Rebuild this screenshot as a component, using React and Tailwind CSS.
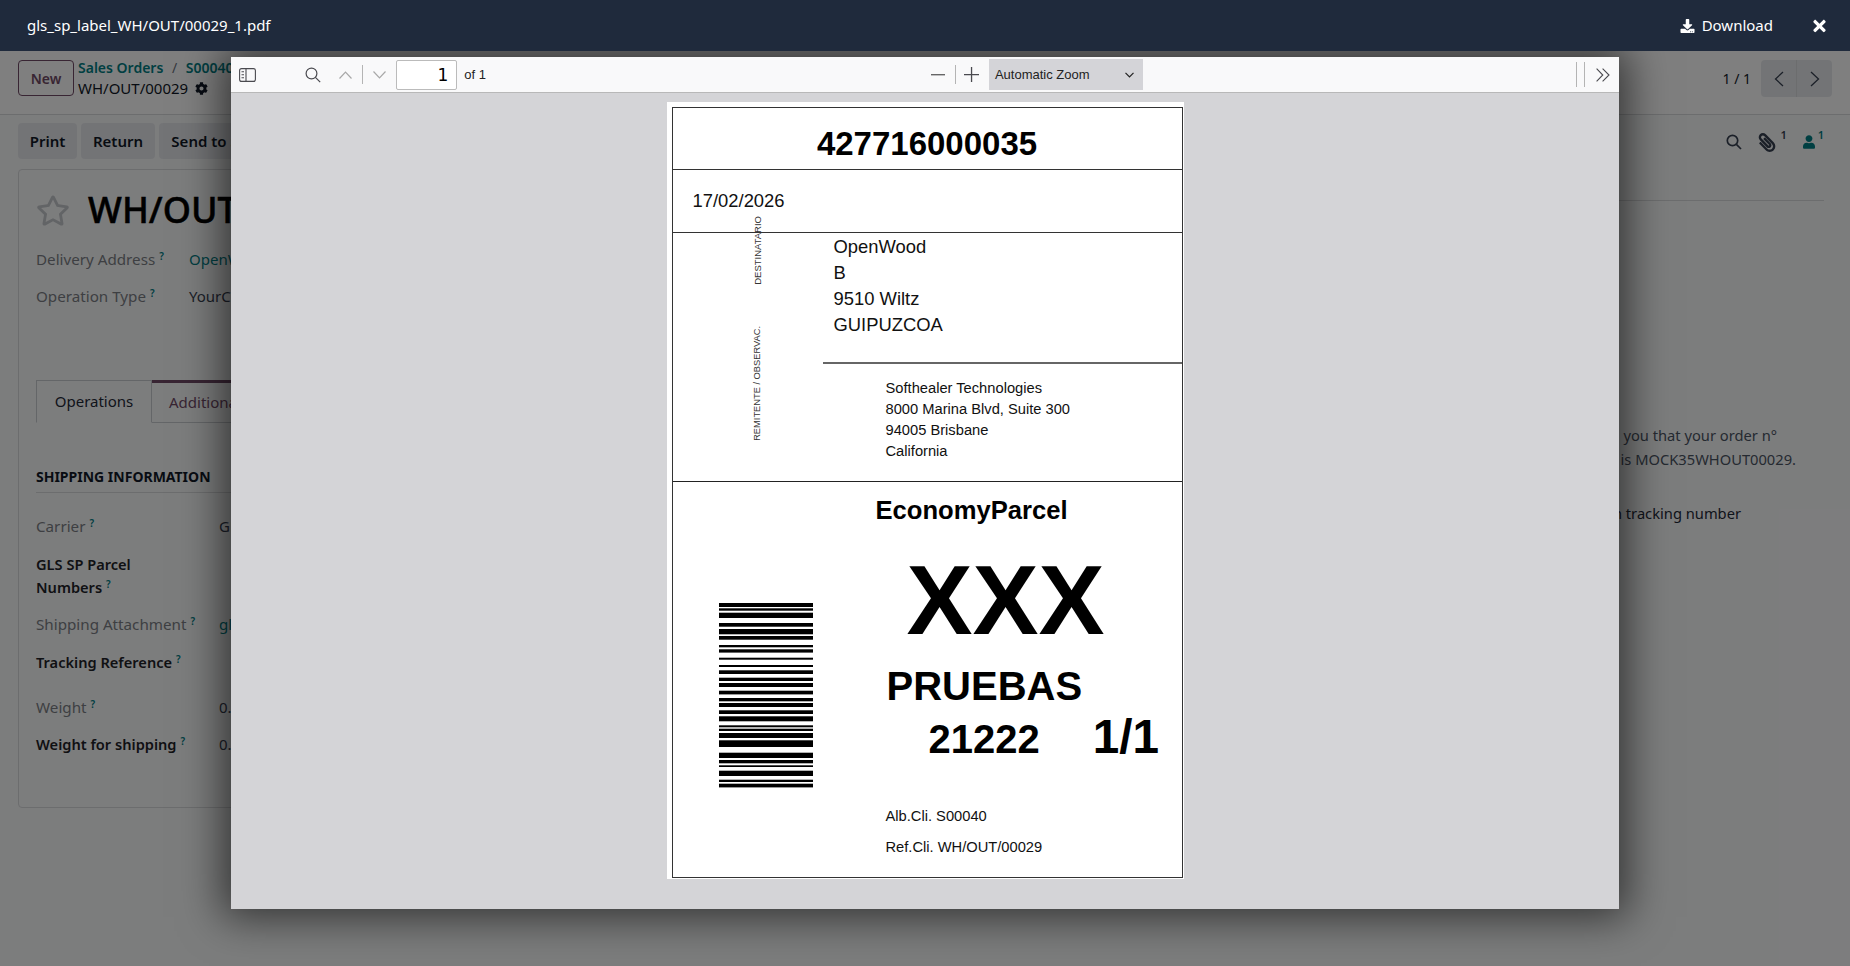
import { FaCog, FaDownload, FaPaperclip, FaRegStar, FaTimes, FaUser } from 'react-icons/fa';

// barres du code-barres : [y, hauteur] en px de la page
const BARS = [
  [0, 4], [5.3, 2.4], [9.7, 5.3], [20, 3.7], [26, 5.3], [33, 3.7], [42, 2.3], [46.3, 3.3],
  [54.7, 2], [62, 2], [67.3, 3.7], [74.7, 3.3], [80, 4], [87.7, 3.7], [95, 3.3], [100, 4],
  [107.3, 3.7], [113.3, 5], [122.3, 2], [125.7, 2.3], [130, 5], [137.3, 6.7], [149.7, 5.3],
  [157, 3.3], [162.3, 1.7], [167.7, 5.3], [176.7, 2.3], [180.7, 3.7],
];

const Hint = () => (
  <sup className="ml-[4px] text-[10px] font-semibold text-[#017e84]">?</sup>
);

const FieldRow = ({ label, value, bold, link, className = '' }) => (
  <div className={`flex items-start ${className}`}>
    <div className={`w-[183px] shrink-0 leading-[23px] ${bold ? 'text-[14.6px] font-semibold text-[#1f2328]' : 'text-[15.2px] text-[#7c7f85]'}`}>
      {label}<Hint />
    </div>
    <div className={`text-[15px] leading-[23px] whitespace-nowrap ${link ? 'text-[#017e84]' : 'text-[#374151]'}`}>{value}</div>
  </div>
);

const PdfToolbar = () => (
  <div className="h-[36px] shrink-0 flex items-center bg-[#f9f9fa] border-b border-[#b8b8b8] font-['Liberation_Sans',sans-serif] text-[#222]">
    <svg className="ml-[8px] w-[17px] h-[14px] text-[#4a4a4f]" viewBox="0 0 17 14" fill="none" stroke="currentColor" strokeWidth="1.1">
      <rect x="0.6" y="0.6" width="15.8" height="12.8" rx="2" />
      <path d="M7 0.6v12.8M2.5 3.8h2.5M2.5 6.8h2.5M2.5 9.8h2.5" />
    </svg>
    <svg className="ml-[49px] w-[16px] h-[16px] text-[#4a4a4f]" viewBox="0 0 16 16" fill="none" stroke="currentColor" strokeWidth="1.2">
      <circle cx="6.5" cy="6.5" r="5.4" />
      <path d="M10.4 10.4 15.2 15.2" />
    </svg>
    <svg className="ml-[18px] w-[13px] h-[8px] text-[#a8a8a8]" viewBox="0 0 13 8" fill="none" stroke="currentColor" strokeWidth="1.2">
      <path d="M0.5 7.5 6.5 1.2l6 6.3" />
    </svg>
    <div className="ml-[10px] w-px h-[19px] bg-[#b4b4b4]" />
    <svg className="ml-[10px] w-[13px] h-[8px] text-[#a8a8a8]" viewBox="0 0 13 8" fill="none" stroke="currentColor" strokeWidth="1.2">
      <path d="M0.5 0.5 6.5 6.8l6-6.3" />
    </svg>
    <div className="ml-[10px] w-[61px] h-[30px] bg-white border border-[#bbb] rounded-[2px] pr-[8px] text-right text-[17px] leading-[28px] font-['DejaVu_Sans',sans-serif] text-black">1</div>
    <span className="ml-[7px] text-[13px]">of 1</span>
    <svg className="ml-[445px] w-[14px] h-[2px] text-[#666]" viewBox="0 0 14 2"><rect width="14" height="1.4" fill="currentColor" /></svg>
    <div className="ml-[10px] w-px h-[19px] bg-[#b4b4b4]" />
    <svg className="ml-[8px] w-[15px] h-[15px] text-[#4a4a4f]" viewBox="0 0 15 15"><path d="M0 7h15v1.3H0zM6.9 0h1.3v15H6.9z" fill="currentColor" /></svg>
    <div className="ml-[10px] w-[154px] h-[31px] bg-[#d4d4d8] flex items-center justify-between pl-[6px] pr-[9px] text-[13px]">
      <span>Automatic Zoom</span>
      <svg className="w-[9px] h-[6px]" viewBox="0 0 9 6" fill="none" stroke="currentColor" strokeWidth="1.2"><path d="M0.5 0.8 4.5 5l4-4.2" /></svg>
    </div>
    <div className="ml-[433px] w-px h-[25px] bg-[#b4b4b4]" />
    <div className="ml-[7px] w-px h-[25px] bg-[#b4b4b4]" />
    <svg className="ml-[11px] w-[14px] h-[14px] text-[#4a4a4f]" viewBox="0 0 14 14" fill="none" stroke="currentColor" strokeWidth="1.1">
      <path d="M0.6 0.6 6.8 7l-6.2 6.4M6.6 0.6 13 7l-6.4 6.4" />
    </svg>
  </div>
);

const LabelPage = () => (
  <div className="relative w-[517px] h-[777px] mx-auto mt-[9px] bg-white pt-[5px] pl-[5px] text-black font-['Liberation_Sans',sans-serif]">
    <div className="relative w-[511px] h-[771px] border border-[#333] flex flex-col">
      <div className="h-[62px] shrink-0 flex items-center justify-center pt-[9px] border-b border-[#333] text-[33px] font-bold leading-none">
        427716000035
      </div>
      <div className="h-[63px] shrink-0 flex items-center pl-[20px] pb-[1px] border-b border-[#333] text-[18.4px] text-[#111]">
        17/02/2026
      </div>
      <div className="h-[249px] shrink-0 border-b border-[#222] text-[#111]">
        <div className="pl-[161px] pt-[1px] text-[18.4px] leading-[26px]">
          <div>OpenWood</div>
          <div>B</div>
          <div>9510 Wiltz</div>
          <div>GUIPUZCOA</div>
        </div>
        <div className="ml-[150px] mt-[24px] border-t-2 border-[#666]" />
        <div className="pl-[213px] pt-[14px] text-[14.7px] leading-[21px]">
          <div>Softhealer Technologies</div>
          <div>8000 Marina Blvd, Suite 300</div>
          <div>94005 Brisbane</div>
          <div>California</div>
        </div>
      </div>
      <div className="flex-1 flex">
        <svg className="ml-[46px] mt-[121px] w-[94px] h-[185px] shrink-0" viewBox="0 0 95 185" preserveAspectRatio="none">
          {BARS.map(([y, h]) => (
            <rect key={y} x="0" y={y} width="95" height={h} fill="#000" />
          ))}
        </svg>
        <div className="ml-[73px] flex flex-col">
          <div className="mt-[13px] -ml-[10px] text-[25.6px] font-bold leading-[30px]">EconomyParcel</div>
          <div className="mt-[26px] ml-[21px] text-[99px] font-bold leading-[97px]">XXX</div>
          <div className="mt-[16px] ml-[1px] text-[40px] font-bold leading-[44px]">PRUEBAS</div>
          <div className="mt-[9px] ml-[43px] flex items-start">
            <div className="text-[40px] font-bold leading-[44px]">21222</div>
            <div className="ml-[53px] -mt-[2px] text-[47.7px] font-bold leading-[44px]">1/1</div>
          </div>
          <div className="mt-[45px] text-[14.7px] leading-[20px] text-[#111] whitespace-nowrap">Alb.Cli. S00040</div>
          <div className="mt-[11px] text-[14.7px] leading-[20px] text-[#111] whitespace-nowrap">Ref.Cli. WH/OUT/00029</div>
        </div>
      </div>
      <div className="absolute left-[79px] top-[108px] [writing-mode:vertical-rl] rotate-180 text-[9.5px] leading-[11px] text-[#333]">DESTINATARIO</div>
      <div className="absolute left-[79px] top-[218px] [writing-mode:vertical-rl] rotate-180 text-[9.3px] leading-[11px] text-[#333] whitespace-nowrap">REMITENTE / OBSERVAC.</div>
    </div>
  </div>
);

const App = () => (
  <div className="relative h-[966px] w-full overflow-hidden bg-[#f9fafb] font-['Noto_Sans',sans-serif] text-[15px] text-[#374151]">
    {/* page Odoo derrière le visualiseur */}
    <div className="pt-[51px]">
      <div className="h-[64px] bg-white border-b border-[#d8dadd] flex items-start px-[18px] pt-[9px]">
        <button type="button" className="w-[56px] h-[36px] rounded-[4px] border border-[#714b67] text-[14px] font-semibold text-[#714b67]">New</button>
        <div className="ml-[4px] -mt-[2px] leading-[20px]">
          <div className="text-[14px] font-semibold text-[#017e84] whitespace-nowrap">Sales Orders <span className="mx-[5px] font-normal text-[#6b7280]">/</span> S00040</div>
          <div className="text-[15px] text-[#111827] flex items-center whitespace-nowrap">WH/OUT/00029 <FaCog className="ml-[7px] w-[13px] h-[13px]" /></div>
        </div>
        <div className="ml-auto flex items-center h-[37px]">
          <span className="text-[14px] text-[#111827]">1 / 1</span>
          <div className="ml-[10px] flex w-[71px] h-[37px] rounded-[4px] overflow-hidden bg-[#e7e9ed]">
            <div className="flex-1 flex items-center justify-center border-r border-[#d8dadd]">
              <svg className="w-[10px] h-[16px]" viewBox="0 0 10 16" fill="none" stroke="#374151" strokeWidth="1.3"><path d="M9 1 1.5 8 9 15" /></svg>
            </div>
            <div className="flex-1 flex items-center justify-center">
              <svg className="w-[10px] h-[16px]" viewBox="0 0 10 16" fill="none" stroke="#374151" strokeWidth="1.3"><path d="M1 1l7.5 7L1 15" /></svg>
            </div>
          </div>
        </div>
      </div>
      <div className="flex">
        <div className="w-[1400px] shrink-0 pl-[18px]">
          <div className="flex gap-[4px] mt-[8px]">
            <button type="button" className="h-[36px] w-[59px] rounded-[4px] bg-[#e7e9ed] font-semibold text-[#111827]">Print</button>
            <button type="button" className="h-[36px] w-[74px] rounded-[4px] bg-[#e7e9ed] font-semibold text-[#111827]">Return</button>
            <button type="button" className="h-[36px] w-[150px] rounded-[4px] bg-[#e7e9ed] font-semibold text-[#111827] pr-[10px]">Send to Shipper</button>
          </div>
          <div className="mt-[10px] h-[639px] border border-[#d8dadd] rounded-[4px] pl-[17px] pt-[22px]">
            <div className="flex items-center h-[36px]">
              <FaRegStar className="w-[34px] h-[33px] text-[#c5c8cc]" />
              <h1 className="ml-[18px] text-[36px] leading-none font-medium text-black [-webkit-text-stroke:0.5px_black]">WH/OUT/00029</h1>
            </div>
            <div className="mt-[20px] flex">
              <div className="w-[153px] text-[15.2px] text-[#7c7f85] leading-[23px]">Delivery Address<Hint /></div>
              <div className="text-[#017e84] leading-[23px]">OpenWood</div>
            </div>
            <div className="mt-[14px] flex">
              <div className="w-[153px] text-[15.2px] text-[#7c7f85] leading-[23px]">Operation Type<Hint /></div>
              <div className="leading-[23px]">YourCompany: Delivery Orders</div>
            </div>
            <div className="mt-[72px] flex h-[43px] border-b border-[#c9ccd1]">
              <div className="w-[116px] h-[43px] border border-[#c9ccd1] border-b-[#f9fafb] flex items-center justify-center text-[#1f2937]">Operations</div>
              <div className="flex-1 border-t-[3px] border-[#714b67] pl-[17px] leading-[39px] text-[#714b67]">Additional Info</div>
            </div>
            <div className="mt-[43px] pb-[4px] border-b border-[#d8dadd] text-[14px] font-bold text-[#111827] leading-[22px]">SHIPPING INFORMATION</div>
            <FieldRow className="mt-[22px]" label="Carrier" value="GLS SP" />
            <FieldRow className="mt-[15px]" label={<>GLS SP Parcel<br />Numbers</>} value="" bold />
            <FieldRow className="mt-[14px]" label="Shipping Attachment" value="gls_sp_label_WH/OUT/00029_1.pdf" link />
            <FieldRow className="mt-[15px]" label="Tracking Reference" value="" bold />
            <FieldRow className="mt-[22px]" label="Weight" value="0.00 kg" />
            <FieldRow className="mt-[14px]" label="Weight for shipping" value="0.00 kg" bold />
          </div>
        </div>
        <div className="flex-1 pr-[26px]">
          <div className="flex justify-end items-start h-[85px] pt-[18px] gap-[17px] text-[#374151]">
            <svg className="w-[16px] h-[16px] mt-[1px] mr-[-1px]" viewBox="0 0 16 16" fill="none" stroke="currentColor" strokeWidth="1.7"><circle cx="6.5" cy="6.5" r="5.2" /><path d="M10.4 10.4 15 15" /></svg>
            <div className="flex"><FaPaperclip className="w-[18px] h-[19px] -scale-x-100" /><span className="ml-[4px] -mt-[6px] text-[11px] font-semibold">1</span></div>
            <div className="flex text-[#017e84] -ml-[1px]"><FaUser className="w-[12px] h-[14px] mt-[2px]" /><span className="ml-[3px] -mt-[6px] text-[11px] font-semibold">1</span></div>
          </div>
          <div className="border-t border-[#d8dadd]" />
          <div className="mt-[222px] whitespace-nowrap text-[14.7px] leading-[24px] text-[#4b5563]">
            <div className="w-[377px] text-right">We are glad to inform you that your order n°</div>
            <div className="w-[396px] text-right">Your tracking reference is MOCK35WHOUT00029.</div>
            <div className="mt-[30px] w-[341px] text-right text-[#1f2937]">Shipment sent with tracking number</div>
          </div>
        </div>
      </div>
    </div>

    {/* visualiseur de fichier */}
    <div className="absolute inset-0 flex flex-col bg-black/50">
      <div className="relative z-10 h-[51px] shrink-0 bg-[#1f2a3c] flex items-center pl-[27px] pr-[23px] text-white">
        <span className="text-[15px]">gls_sp_label_WH/OUT/00029_1.pdf</span>
        <FaDownload className="ml-auto w-[15px] h-[14px]" />
        <span className="ml-[7px] text-[15px]">Download</span>
        <FaTimes className="ml-[39px] w-[15px] h-[18px]" />
      </div>
      <div className="mt-[6px] mx-auto w-[75%] h-[852px] flex flex-col bg-[#d4d4d7] shadow-[0_0_40px_8px_rgba(0,0,0,0.6)]">
        <PdfToolbar />
        <LabelPage />
      </div>
    </div>
  </div>
);

export default App;
